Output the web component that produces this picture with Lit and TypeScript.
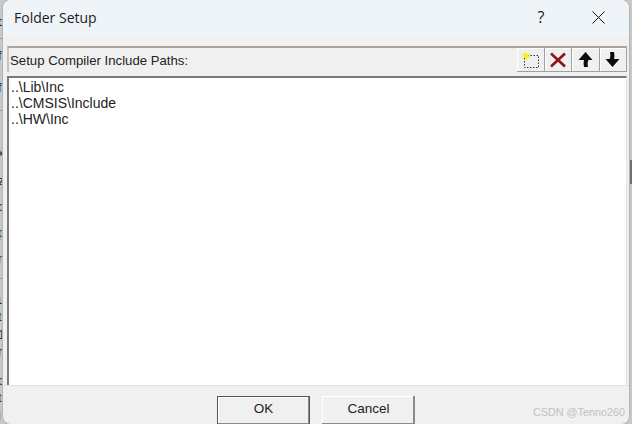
import { LitElement, css, html } from 'lit'
import { customElement } from 'lit/decorators.js'

const paths = ['..\\Lib\\Inc', '..\\CMSIS\\Include', '..\\HW\\Inc']
const peeks = [
  ['d', 22], ['f', 56], ['f', 88], ['x', 153], ['z', 181], ['o', 207], ['p', 233], ['n', 259],
  ['u', 300], ['t', 317], ['1', 335], ['r', 352], ['o', 381], ['t', 398], ['i', 416],
]
const rules = [38, 110, 278]

@customElement('app-root')
export class AppRoot extends LitElement {
  static styles = css`
    :host {
      display: block;
      width: 632px;
      height: 424px;
      overflow: hidden;
      position: relative;
      background: #c8c8c8;
      font-family: 'Liberation Sans', Arial, sans-serif;
      color: #1a1a1a;
    }
    .peek {
      position: absolute;
      left: -2px;
      font-size: 13px;
      line-height: 14px;
      color: #2c3440;
    }
    .rule {
      position: absolute;
      left: 0;
      width: 3px;
      height: 1px;
      background: #9c9c9c;
    }
    .window {
      position: absolute;
      left: 3px;
      top: 0;
      width: 626px;
      height: 424px;
      box-sizing: border-box;
      display: flex;
      flex-direction: column;
      background: #f0f0f0;
      border-radius: 8px;
      overflow: hidden;
      box-shadow: 0 0 0 1px #b4b4b4;
    }
    .title {
      height: 37px;
      flex: none;
      display: flex;
      align-items: center;
      background: #eff4f9;
      padding-left: 11px;
      padding-bottom: 3px;
      box-sizing: border-box;
      font-family: 'Open Sans', 'Noto Sans', sans-serif;
      font-size: 14px;
      color: #1c1c1c;
    }
    .title .name {
      flex: 1;
    }
    .help {
      width: 46px;
      text-align: center;
      font-size: 16px;
      margin-right: 11px;
    }
    .close {
      width: 46px;
      display: flex;
      justify-content: center;
      margin-right: 8px;
    }
    .body {
      flex: 1;
      display: flex;
      flex-direction: column;
      padding: 9px 2px 0 4px;
      min-height: 0;
    }
    .header {
      height: 26px;
      flex: none;
      box-sizing: border-box;
      display: flex;
      align-items: center;
      border-top: 2px solid #a4a4a4;
      border-left: 2px solid #c4c4c4;
      padding-left: 1px;
      font-size: 13.2px;
      color: #222;
    }
    .header .label {
      flex: 1;
      padding-top: 1px;
    }
    .tools {
      display: flex;
    }
    .tool {
      width: 27.500px;
      height: 24px;
      box-sizing: border-box;
      display: flex;
      align-items: center;
      justify-content: center;
      background: #f0f0f0;
      border-right: 1px solid #a0a0a0;
      border-bottom: 1px solid #a0a0a0;
      box-shadow: inset 1px 1px 0 #fff;
    }
    .list {
      flex: 1;
      min-height: 0;
      margin-top: 4px;
      box-sizing: border-box;
      background: #fff;
      border-top: 2px solid #7a7a7a;
      border-left: 2px solid #7a7a7a;
      border-right: 1px solid #e2e2e2;
      padding: 1px 0 0 2px;
      font-size: 14px;
      line-height: 16px;
      color: #222;
    }
    .footer {
      height: 39px;
      flex: none;
      box-sizing: border-box;
      display: flex;
      justify-content: center;
      align-items: flex-start;
      gap: 12px;
      padding-top: 10px;
      border-top: 1px solid #e2e2e2;
      position: relative;
    }
    button {
      width: 93px;
      height: 29px;
      box-sizing: border-box;
      font: inherit;
      font-size: 13.500px;
      color: #222;
      background: #f0f0f0;
      border: none;
      padding: 0 0 4px;
      box-shadow: inset -2px -2px 0 #8a8a8a, inset 1px 1px 0 #fff;
    }
    button.default {
      box-shadow: inset 0 0 0 1px #555, inset -2px -2px 0 #8a8a8a, inset 2px 2px 0 #fff;
    }
    .mark {
      position: absolute;
      right: 4px;
      top: 20px;
      font-size: 10.800px;
      color: #c2c2c2;
    }
    .scroll-mark {
      position: absolute;
      left: 629px;
      top: 160px;
      width: 3px;
      height: 24px;
      background: #6f6f6f;
    }
  `

  render() {
    return html`
      ${peeks.map(([c, y]) => html`<span class="peek" style="top:${Number(y) - 7}px">${c}</span>`)}
      ${rules.map(y => html`<div class="rule" style="top:${y}px"></div>`)}
      <div class="scroll-mark"></div>
      <div class="window">
        <div class="title">
          <span class="name">Folder Setup</span>
          <span class="help">?</span>
          <span class="close">
            <svg width="13" height="13" viewBox="0 0 13 13"><path d="M.5.5l12 12M12.500.5l-12 12" stroke="#111" fill="none"/></svg>
          </span>
        </div>
        <div class="body">
          <div class="header">
            <span class="label">Setup Compiler Include Paths:</span>
            <div class="tools">
              <div class="tool">
                <svg width="20" height="18" viewBox="0 0 20 18">
                  <rect x="4.500" y="4.500" width="14" height="12" fill="none" stroke="#333" stroke-dasharray="1.500 1.500"/>
                  <path d="M6 0l1 3.500 3.500-1.500-2 3 2.500 2-3.500 0-1 3.500-1-3.500-3.500 1 2-3-2.500-2.500 3.500 .5z" fill="#f6ee20"/>
                </svg>
              </div>
              <div class="tool">
                <svg width="18" height="16" viewBox="0 0 18 16"><path d="M2 1.500l14 13M16 1.500l-14 13" stroke="#8f1414" stroke-width="2.600" fill="none"/></svg>
              </div>
              <div class="tool">
                <svg width="15" height="15" viewBox="0 0 15 15"><path d="M7.500 0L14.500 8h-4c-1 2-1 4-.5 7H6c-.5-3-.5-5 0-7H.5z" fill="#0c0c0c"/></svg>
              </div>
              <div class="tool">
                <svg width="15" height="15" viewBox="0 0 15 15"><path d="M7.500 15L.5 7h4c1-2 1-4 .5-7h4c.5 3 .5 5 0 7h5.500z" fill="#0c0c0c"/></svg>
              </div>
            </div>
          </div>
          <div class="list">
            ${paths.map(p => html`<div>${p}</div>`)}
          </div>
        </div>
        <div class="footer">
          <button class="default">OK</button>
          <button>Cancel</button>
          <span class="mark">CSDN @Tenno260</span>
        </div>
      </div>
    `
  }
}
